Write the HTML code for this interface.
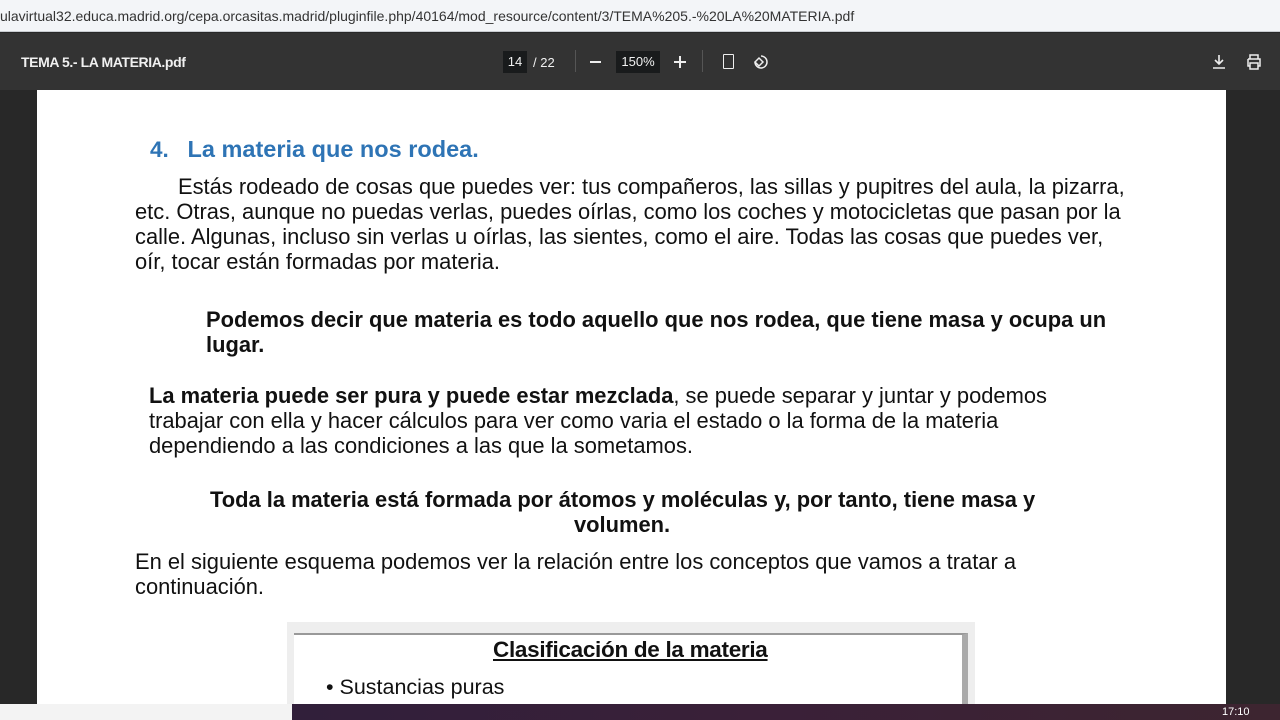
<!DOCTYPE html>
<html><head><meta charset="utf-8"><style>
*{margin:0;padding:0;box-sizing:border-box}
body{width:1280px;height:720px;overflow:hidden;background:#282828;font-family:"Liberation Sans",Arial,sans-serif;position:relative}
.url{position:absolute;left:0;top:0;width:1280px;height:32px;background:#f3f5f8;border-bottom:1px solid #c9ccd1;font-size:14px;color:#333;line-height:32px;padding-left:0}
.tb{position:absolute;top:33px;left:0;width:1280px;height:57px;background:#333333;color:#f1f1f1}
.page{position:absolute;left:37px;top:90px;width:1189px;height:614px;background:#fff;color:#111}
.t{position:absolute;font-size:21.9px;line-height:25px;white-space:nowrap}
.task{position:absolute;left:0;top:704px;width:1280px;height:16px;background:linear-gradient(90deg,#2b1e3c,#3a2038 60%,#3d2530)}
</style></head><body>
<div class="url">ulavirtual32.educa.madrid.org/cepa.orcasitas.madrid/pluginfile.php/40164/mod_resource/content/3/TEMA%205.-%20LA%20MATERIA.pdf</div>
<div class="tb">
<div style="position:absolute;left:21px;top:21px;font-size:14px;font-weight:bold;letter-spacing:-0.4px">TEMA 5.- LA MATERIA.pdf</div>
<div style="position:absolute;left:503px;top:18px;width:24px;height:22px;background:#191b1c;font-size:13px;text-align:center;line-height:22px">14</div>
<div style="position:absolute;left:533px;top:22px;font-size:13px">/ 22</div>
<div style="position:absolute;left:575px;top:17px;width:1px;height:22px;background:#555"></div>
<div style="position:absolute;left:590px;top:28px;width:11px;height:2px;background:#eee"></div>
<div style="position:absolute;left:616px;top:18px;width:44px;height:22px;background:#191b1c;font-size:13px;text-align:center;line-height:22px">150%</div>
<div style="position:absolute;left:674px;top:28px;width:12px;height:2px;background:#eee"></div>
<div style="position:absolute;left:679px;top:23px;width:2px;height:12px;background:#eee"></div>
<div style="position:absolute;left:702px;top:17px;width:1px;height:22px;background:#555"></div>
<div style="position:absolute;left:723px;top:21px;width:11px;height:15px;border:1.5px solid #eee;border-radius:1px"></div>
<svg style="position:absolute;left:752px;top:20px" width="18" height="18" viewBox="0 0 18 18" fill="none" stroke="#eee" stroke-width="1.5"><path d="M9 3a6 6 0 1 1-6 6"/><path d="M3 9l4-4 4 4-4 4z"/></svg>
<svg style="position:absolute;left:1210px;top:20px" width="18" height="18" viewBox="0 0 18 18" fill="none" stroke="#eee" stroke-width="1.6"><path d="M9 2v9M5 7l4 4 4-4M3 15h12"/></svg>
<svg style="position:absolute;left:1245px;top:20px" width="18" height="18" viewBox="0 0 18 18" fill="none" stroke="#eee" stroke-width="1.5"><path d="M5 6V2h8v4M3 6h12v7h-2M5 13H3V6M5 10h8v6H5z"/></svg>
</div>
<div class="page">
<div class="t" style="left:113px;top:47px;color:#2e74b5;font-weight:bold;font-size:22.5px">4.&nbsp;&nbsp;&nbsp;<span style="font-size:23.5px">La materia que nos rodea.</span></div>
<div class="t" style="left:141px;top:84px">Estás rodeado de cosas que puedes ver: tus compañeros, las sillas y pupitres del aula, la pizarra,</div>
<div class="t" style="left:98px;top:109px">etc. Otras, aunque no puedas verlas, puedes oírlas, como los coches y motocicletas que pasan por la</div>
<div class="t" style="left:98px;top:134px">calle. Algunas, incluso sin verlas u oírlas, las sientes, como el aire. Todas las cosas que puedes ver,</div>
<div class="t" style="left:98px;top:159px">oír, tocar están formadas por materia.</div>
<div class="t" style="left:169px;top:217px;font-weight:bold">Podemos decir que materia es todo aquello que nos rodea, que tiene masa y ocupa un</div>
<div class="t" style="left:169px;top:242px;font-weight:bold">lugar.</div>
<div class="t" style="left:112px;top:293px"><b>La materia puede ser pura y puede estar mezclada</b>, se puede separar y juntar y podemos</div>
<div class="t" style="left:112px;top:318px">trabajar con ella y hacer cálculos para ver como varia el estado o la forma de la materia</div>
<div class="t" style="left:112px;top:343px">dependiendo a las condiciones a las que la sometamos.</div>
<div class="t" style="left:173px;top:397px;font-weight:bold">Toda la materia está formada por átomos y moléculas y, por tanto, tiene masa y</div>
<div class="t" style="left:537px;top:422px;font-weight:bold">volumen.</div>
<div class="t" style="left:98px;top:459px">En el siguiente esquema podemos ver la relación entre los conceptos que vamos a tratar a</div>
<div class="t" style="left:98px;top:484px">continuación.</div>
<div style="position:absolute;left:250px;top:532px;width:688px;height:82px;background:#eee"></div>
<div style="position:absolute;left:257px;top:543px;width:674px;height:71px;background:#fff;border-top:2px solid #999;border-right:6px solid #aaa"></div>
<div class="t" style="left:456px;top:547px;font-weight:bold;text-decoration:underline;font-size:22.5px;letter-spacing:-0.3px">Clasificación de la materia</div>
<div class="t" style="left:289px;top:585px;font-size:21.5px">• Sustancias puras</div>
</div>
<div class="task"><div style="position:absolute;left:0;top:0;width:292px;height:16px;background:#f3f3f3"></div></div>
<div style="position:absolute;left:1222px;top:706px;font-size:11px;color:#fff">17:10</div>
</body></html>
